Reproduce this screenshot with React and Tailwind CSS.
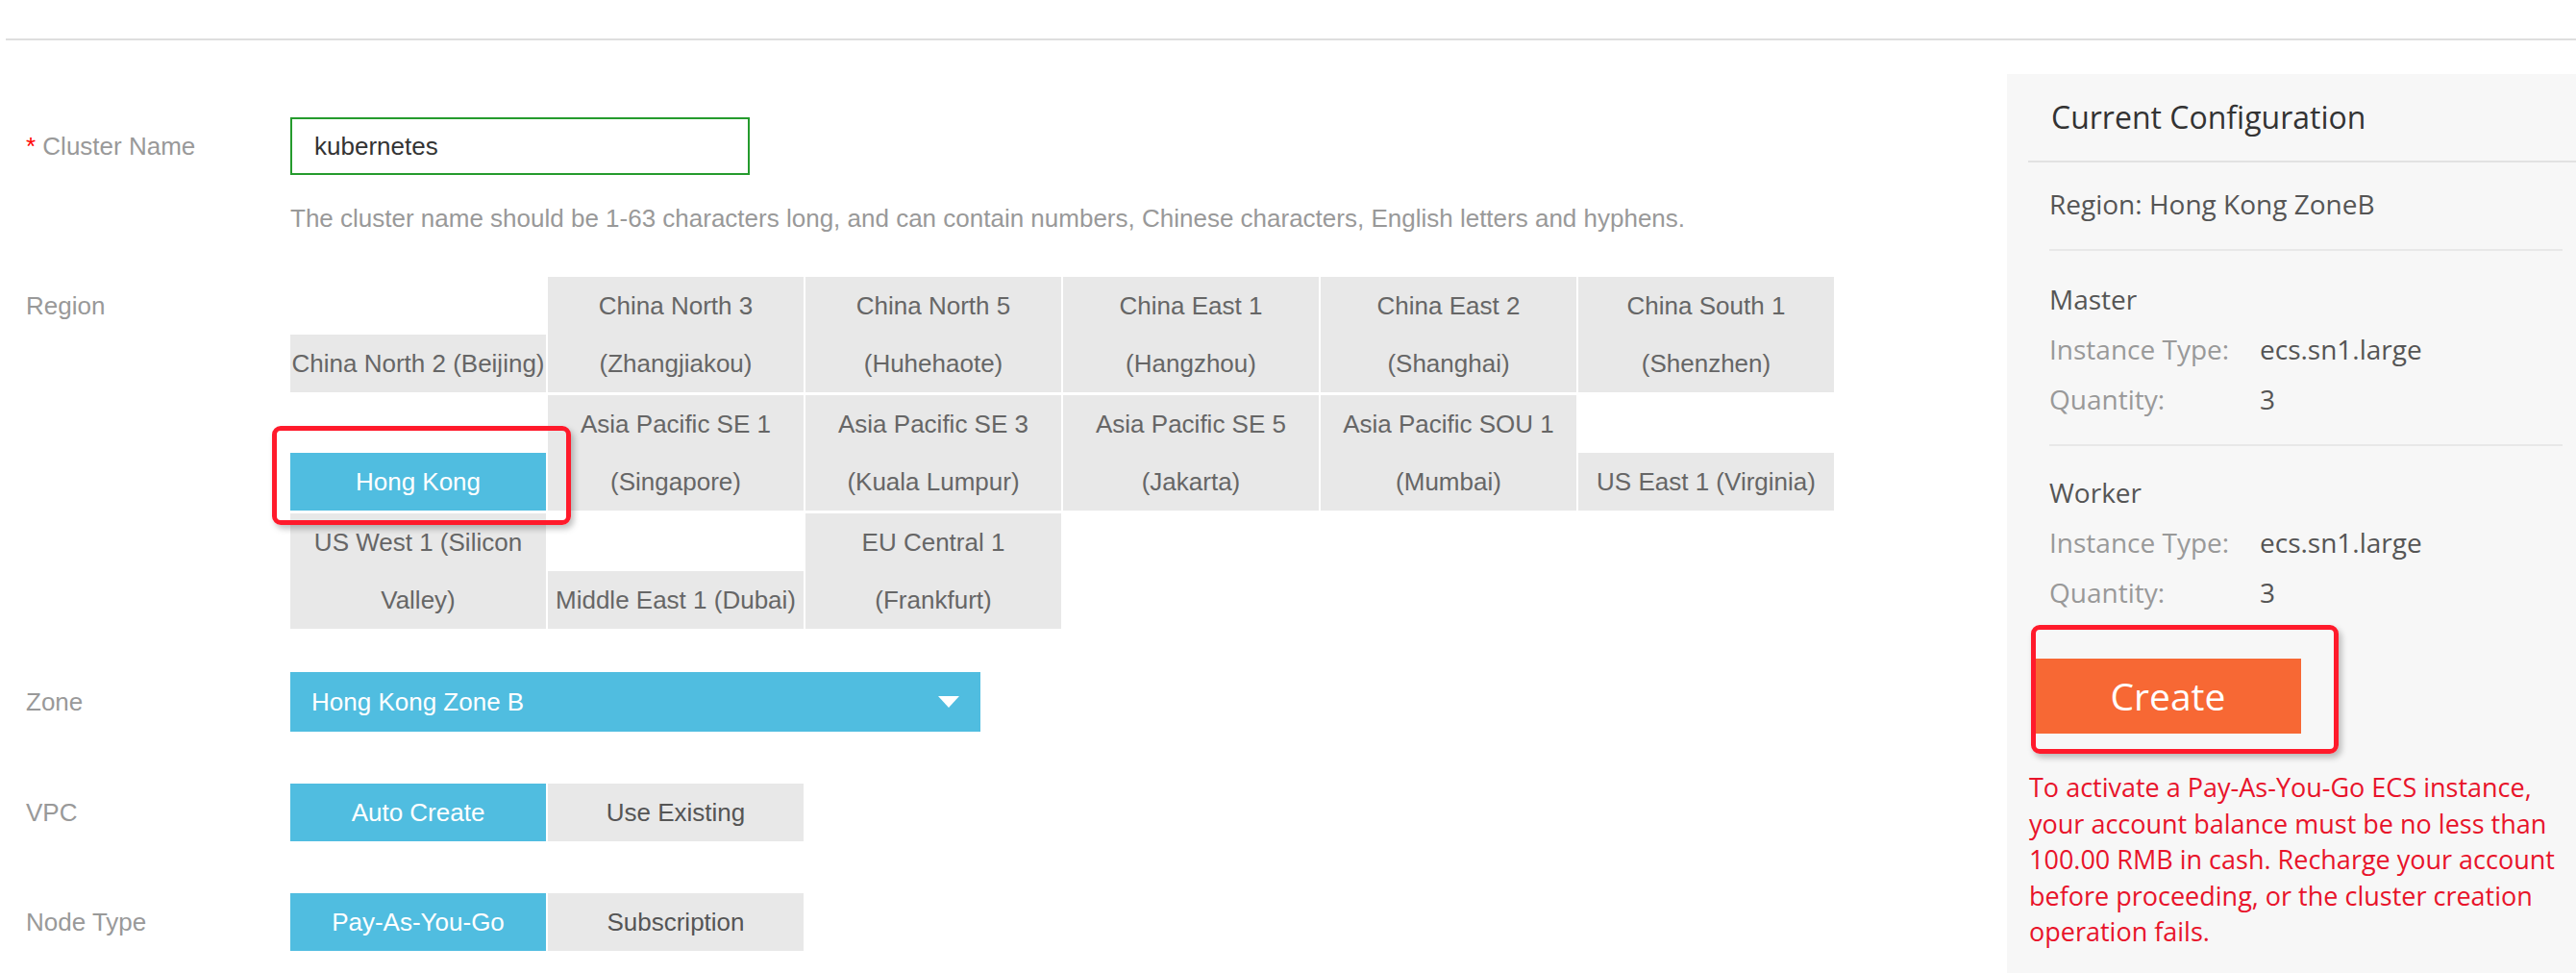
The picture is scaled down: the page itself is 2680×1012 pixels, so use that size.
import React from 'react';

const BLUE = '#50bde0';

const REGIONS = [
  ['China North 2 (Beijing)'],
  ['China North 3', '(Zhangjiakou)'],
  ['China North 5', '(Huhehaote)'],
  ['China East 1', '(Hangzhou)'],
  ['China East 2', '(Shanghai)'],
  ['China South 1', '(Shenzhen)'],
  ['Hong Kong'],
  ['Asia Pacific SE 1', '(Singapore)'],
  ['Asia Pacific SE 3', '(Kuala Lumpur)'],
  ['Asia Pacific SE 5', '(Jakarta)'],
  ['Asia Pacific SOU 1', '(Mumbai)'],
  ['US East 1 (Virginia)'],
  ['US West 1 (Silicon', 'Valley)'],
  ['Middle East 1 (Dubai)'],
  ['EU Central 1', '(Frankfurt)'],
];

function Label({ children, required }) {
  return (
    <div className="w-[275px] shrink-0 text-[26px] text-[#999]">
      {required && <span className="text-[#f00]">* </span>}
      {children}
    </div>
  );
}

function Toggle({ options, active }) {
  return (
    <div className="flex gap-[2px]">
      {options.map((o) => (
        <div
          key={o}
          className={
            o === active
              ? 'flex h-[60px] w-[266px] items-center justify-center bg-[#50bde0] text-white'
              : 'flex h-[60px] w-[266px] items-center justify-center bg-[#e8e8e8] text-[#555]'
          }
        >
          {o}
        </div>
      ))}
    </div>
  );
}

function RegionCell({ lines }) {
  const selected = lines[0] === 'Hong Kong';
  return (
    <div
      className={
        selected
          ? 'relative z-10 w-[266px] whitespace-nowrap bg-[#50bde0] text-center leading-[60px] text-white'
          : 'relative w-[266px] whitespace-nowrap bg-[#e8e8e8] text-center leading-[60px] text-[#666]'
      }
    >
      {lines.map((l) => (
        <div key={l}>{l}</div>
      ))}
      {/* marca roja de la captura */}
      {selected && (
        <div className="pointer-events-none absolute -top-[28px] -left-[19px] -right-[26px] -bottom-[15px] rounded-[9px] border-[5px] border-[#ff1a2b] shadow-[3px_4px_6px_rgba(0,0,0,0.25)]" />
      )}
    </div>
  );
}

function ConfigRow({ label, value }) {
  return (
    <div className="flex leading-[52px]">
      <div className="w-[219px] text-[#999]">{label}</div>
      <div className="text-[#555]">{value}</div>
    </div>
  );
}

export default function App() {
  return (
    <div className="h-[1012px] w-[2680px] overflow-hidden bg-white font-['Liberation_Sans',Arial,sans-serif]">
      <div className="h-[40px]" />
      <div className="ml-[6px] h-[2px] bg-[#dedede]" />

      <div className="flex">
        {/* Formulario */}
        <div className="w-[2088px] shrink-0 pl-[27px] text-[26px]">
          <div className="mt-[80px] flex">
            <div className="flex h-[60px] items-center">
              <Label required>Cluster Name</Label>
            </div>
            <div>
              <div className="flex h-[60px] w-[478px] items-center border-2 border-[#259b2d] pl-[23px] text-[#333]">
                kubernetes
              </div>
              <p className="mt-[30px] leading-[30px] text-[#999]">
                The cluster name should be 1-63 characters long, and can contain numbers, Chinese characters, English letters and hyphens.
              </p>
            </div>
          </div>

          <div className="mt-[46px] flex items-start">
            <div className="leading-[60px]">
              <Label>Region</Label>
            </div>
            <div className="flex w-[1610px] flex-wrap items-end gap-x-[2px] gap-y-[3px]">
              {REGIONS.map((r) => (
                <RegionCell key={r.join(' ')} lines={r} />
              ))}
            </div>
          </div>

          <div className="mt-[45px] flex items-center">
            <Label>Zone</Label>
            <div className="flex h-[62px] w-[718px] items-center justify-between pr-[22px] pl-[22px] text-white" style={{ background: BLUE }}>
              <span>Hong Kong Zone B</span>
              <svg width="22" height="12" viewBox="0 0 22 12">
                <polygon points="0,0 22,0 11,12" fill="#fff" />
              </svg>
            </div>
          </div>

          <div className="mt-[54px] flex items-center">
            <Label>VPC</Label>
            <Toggle options={['Auto Create', 'Use Existing']} active="Auto Create" />
          </div>

          <div className="mt-[54px] flex items-center">
            <Label>Node Type</Label>
            <Toggle options={['Pay-As-You-Go', 'Subscription']} active="Pay-As-You-Go" />
          </div>
        </div>

        {/* Panel de configuración */}
        <aside className="mt-[35px] h-[935px] flex-1 bg-[#f7f7f7] font-['Open_Sans',sans-serif] text-[28px]">
          <div className="flex h-[90px] items-center pl-[46px] text-[32px] text-[#333]">
            Current Configuration
          </div>
          <div className="ml-[22px] h-[2px] bg-[#e2e2e2]" />

          <div className="mr-[14px] ml-[44px]">
            <div className="border-b-2 border-[#e8e8e8] pt-[17px] pb-[21px] leading-[52px] text-[#555]">
              Region: Hong Kong ZoneB
            </div>
            <div className="border-b-2 border-[#e8e8e8] pt-[24px] pb-[21px]">
              <div className="leading-[52px] text-[#555]">Master</div>
              <ConfigRow label="Instance Type:" value="ecs.sn1.large" />
              <ConfigRow label="Quantity:" value="3" />
            </div>
            <div className="pt-[22px]">
              <div className="leading-[52px] text-[#555]">Worker</div>
              <ConfigRow label="Instance Type:" value="ecs.sn1.large" />
              <ConfigRow label="Quantity:" value="3" />
            </div>
          </div>

          <div className="relative mt-[43px] ml-[29px] w-[277px]">
            <button className="flex h-[78px] w-[277px] items-center justify-center bg-[#f76834] text-[39px] text-white">
              Create
            </button>
            <div className="pointer-events-none absolute -top-[35px] -left-[4px] -right-[39px] -bottom-[21px] rounded-[9px] border-[5px] border-[#ff1a2b] shadow-[3px_4px_6px_rgba(0,0,0,0.25)]" />
          </div>

          <p className="mt-[37px] ml-[23px] w-[560px] text-[27px] leading-[37.5px] text-[#e8132a]">
            To activate a Pay-As-You-Go ECS instance, your account balance must be no less than 100.00 RMB in cash. Recharge your account before proceeding, or the cluster creation operation fails.
          </p>
        </aside>
      </div>
    </div>
  );
}
